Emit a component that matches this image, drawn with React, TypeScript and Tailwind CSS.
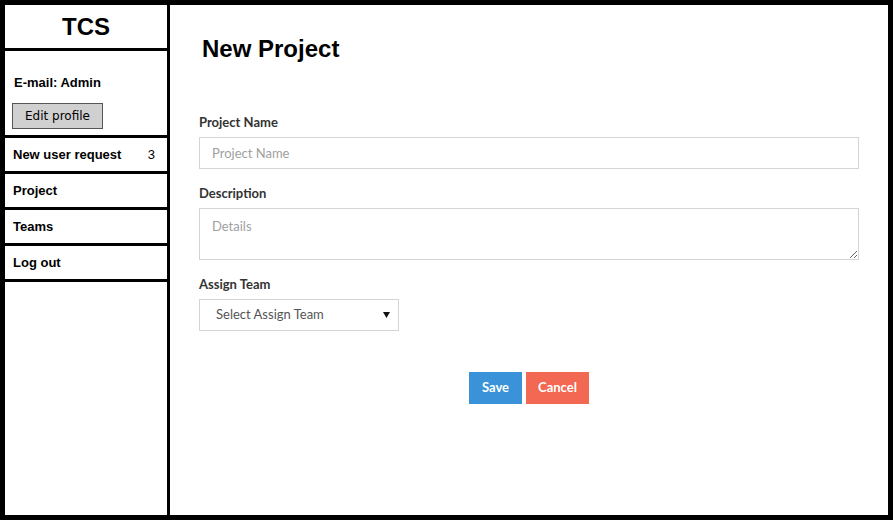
import { useState } from 'react'

const navItems = [
  { label: 'New user request', count: '3' },
  { label: 'Project' },
  { label: 'Teams' },
  { label: 'Log out' },
]

export default function App() {
  const [name, setName] = useState('')
  const [details, setDetails] = useState('')

  return (
    <div className="w-[893px] h-[520px] bg-white border-[5px] border-black flex overflow-hidden" style={{ fontFamily: '"Liberation Sans", Arial, sans-serif' }}>
      {/* Sidebar */}
      <aside className="w-[165px] shrink-0 border-r-[3px] border-black flex flex-col">
        <div className="h-[46px] border-b-[3px] border-black flex items-center justify-center">
          <span className="text-[24px] leading-[28px] font-bold text-black">TCS</span>
        </div>

        <div className="h-[87px] border-b-[3px] border-black px-[7px] pt-[24px]">
          <div className="text-[13px] leading-[16px] font-bold text-black pl-[2px]">E-mail: Admin</div>
          <button
            className="mt-[12px] w-[91px] h-[26px] bg-[#d0d0d0] border border-[#555] text-[12px] text-black flex items-center justify-center"
            style={{ fontFamily: '"DejaVu Sans", sans-serif' }}
          >
            Edit profile
          </button>
        </div>

        {navItems.map((item) => (
          <div key={item.label} className="h-[36px] border-b-[3px] border-black flex items-center justify-between pl-[8px] pr-[12px]">
            <span className="text-[13px] font-bold text-black">{item.label}</span>
            {item.count && <span className="text-[13px] text-black">{item.count}</span>}
          </div>
        ))}
      </aside>

      {/* Main */}
      <main className="flex-1 px-[29px] pt-[30px]" style={{ fontFamily: 'Lato, "Open Sans", sans-serif' }}>
        <h1 className="text-[24px] leading-[28px] font-bold text-black pl-[3px]" style={{ fontFamily: '"Liberation Sans", Arial, sans-serif' }}>
          New Project
        </h1>

        <div className="mt-[50px] flex flex-col">
          <label className="text-[13px] font-bold text-[#333] leading-[18px] mb-[6px]">Project Name</label>
          <input
            value={name}
            onChange={(e) => setName(e.target.value)}
            placeholder="Project Name"
            className="h-[32px] w-full border border-[#d4d4d4] px-[12px] text-[13px] text-[#333] placeholder:text-[#a0a0a0] outline-none"
          />

          <label className="mt-[15px] text-[13px] font-bold text-[#333] leading-[18px] mb-[6px]">Description</label>
          <textarea
            value={details}
            onChange={(e) => setDetails(e.target.value)}
            placeholder="Details"
            className="h-[52px] w-full border border-[#d4d4d4] px-[12px] pt-[8px] text-[13px] text-[#333] placeholder:text-[#a0a0a0] outline-none resize-y"
          />

          <label className="mt-[15px] text-[13px] font-bold text-[#333] leading-[18px] mb-[6px]">Assign Team</label>
          <div className="h-[32px] w-[200px] border border-[#d4d4d4] pl-[16px] pr-[8px] flex items-center justify-between text-[13px] text-[#555]">
            <span>Select Assign Team</span>
            <svg width="7" height="6" viewBox="0 0 7 6">
              <path d="M0 0 L7 0 L3.5 6 Z" fill="#111" />
            </svg>
          </div>

          <div className="mt-[41px] flex justify-center gap-[4px]">
            <button className="h-[32px] w-[53px] bg-[#3a93d8] text-white text-[13px] font-bold">Save</button>
            <button className="h-[32px] w-[63px] bg-[#f26852] text-white text-[13px] font-bold">Cancel</button>
          </div>
        </div>
      </main>
    </div>
  )
}
